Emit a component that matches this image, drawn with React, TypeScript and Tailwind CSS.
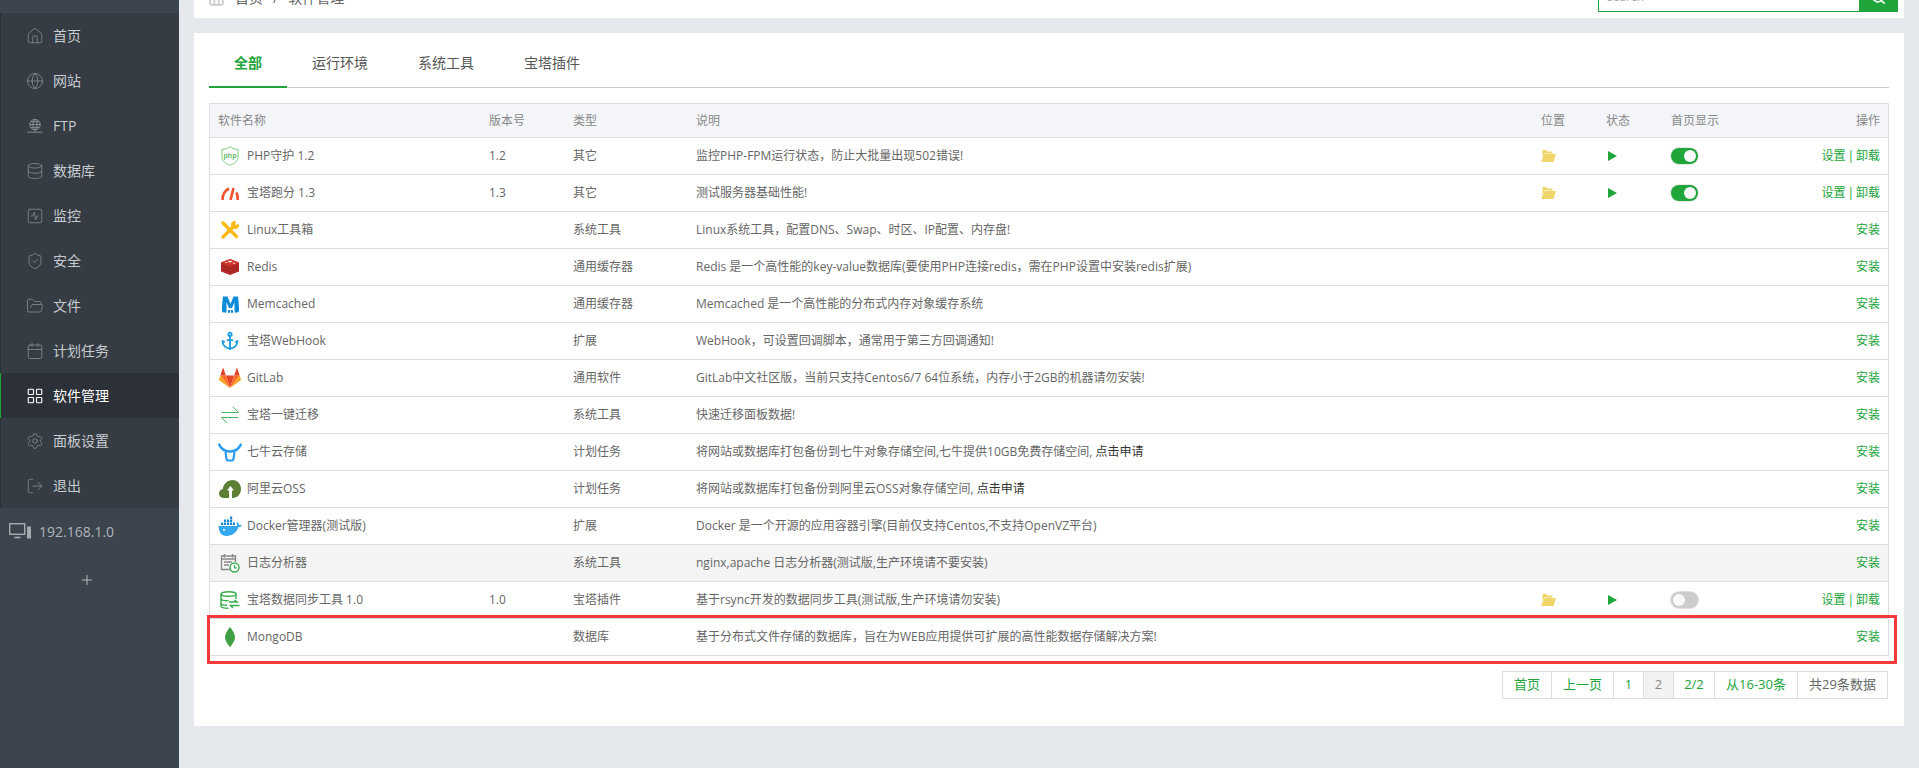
import type { ReactNode } from 'react';
import {
  Anchor,
  Calendar,
  Database,
  FolderOpen,
  Globe,
  House,
  LayoutGrid,
  LogOut,
  Plus,
  Search,
  Settings,
  ShieldCheck,
  SquareActivity,
} from 'lucide-react';

const FtpIcon = ({ className }: { className?: string }) => (
  <svg viewBox="-1.5 -1.5 19 19" fill="none" stroke="currentColor" strokeWidth="1" className={className}>
    <circle cx="8" cy="6.500" r="5.500" />
    <path d="M2.500 6.500h11M8 1c-3 3-3 8 0 11M8 1c3 3 3 8 0 11M3.500 3.500h9M3.500 9.500h9M0 14.500h16M8 12v2" />
  </svg>
);

const PhpIcon = () => (
  <svg viewBox="0 0 18 20" className="w-[18px] h-[20px]">
    <path d="M9 .8c2.500 1.700 5 2.400 8 2.600v7.400c0 4-3.400 6.800-8 8.400-4.600-1.600-8-4.400-8-8.400V3.400c3-.2 5.500-.9 8-2.600z" fill="none" stroke="#7ccd82" strokeWidth="1" />
    <text x="9" y="12" textAnchor="middle" fontSize="7" fontWeight="700" fill="#63bb6a" fontFamily="Liberation Sans, sans-serif">php</text>
  </svg>
);

const SpeedIcon = () => (
  <svg viewBox="0 0 18 14" fill="none" stroke="#f4522d" strokeWidth="2.600" className="w-[18px] h-[14px]">
    <path d="M1.500 14C1.500 8.500 4 4.500 8 2.500M9.500 14l3-12M15.500 6.500c1 2.500 1.300 5 1.300 7.500" />
  </svg>
);

const ToolIcon = () => (
  <svg viewBox="0 0 18 18" className="w-[18px] h-[18px]">
    <path d="M2 16 12.500 5.500" stroke="#fdb813" strokeWidth="3.200" strokeLinecap="round" />
    <path d="M2.500 2.500 15.500 15.500" stroke="#fdb813" strokeWidth="3.200" strokeLinecap="round" />
    <circle cx="14" cy="4" r="4" fill="#fdb813" />
    <path d="M14 4l1-4h3v3z" fill="#fff" />
    <path d="M0 1.500 1.500 0l3.500 2.500-2.500 2.500z" fill="#fdb813" />
  </svg>
);

const RedisIcon = () => (
  <svg viewBox="0 0 18 16" className="w-[18px] h-[16px]">
    <path d="M0 3.500 9 0l9 3.500v9L9 16l-9-3.500z" fill="#b52b27" />
    <path d="M9 0l9 3.500L9 7 0 3.500z" fill="#d1352f" />
    <path d="M0 6.500 9 10l9-3.500M0 9.500 9 13l9-3.500" fill="none" stroke="#8f201c" strokeWidth=".7" />
    <path d="M9 1.500l2.500 1L9 3.600l-2.500-1.100z" fill="#fff" />
    <path d="M3.500 3.500 5 3l1.500.6L5 4.200zM11.500 4.300l2-.7 1.200.6-2 .7z" fill="#f6c9c6" />
  </svg>
);

const MemcachedIcon = () => (
  <svg viewBox="0 0 17 17" className="w-[17px] h-[17px]">
    <path d="M1 .5h4.500L8.500 8l3-7.500H16c.6 4.500 1 9.500 1 14 0 1.200-.6 2-1.800 2h-2.700V6L10 12H7L4.500 6v10.500H1.800C.6 16.500 0 15.700 0 14.500 0 10 .4 5 1 .5z" fill="#0a8bd8" />
    <rect x="6" y="14" width="2" height="2.800" fill="#0a8bd8" />
    <rect x="9" y="14" width="2" height="2.800" fill="#0a8bd8" />
  </svg>
);

const GitlabIcon = () => (
  <svg viewBox="0 0 22 20" className="w-[22px] h-[20px]">
    <path d="M11 20 15.100 7.500H6.900z" fill="#e24329" />
    <path d="M11 20 6.900 7.500H1.300z" fill="#fc6d26" />
    <path d="M11 20l4.100-12.500h5.600z" fill="#fc6d26" />
    <path d="M1.300 7.500.1 11.200c-.1.500 0 1 .4 1.300L11 20z" fill="#fca326" />
    <path d="M20.700 7.500l1.200 3.700c.1.500 0 1-.4 1.300L11 20z" fill="#fca326" />
    <path d="M1.300 7.500h5.600L4.500.4c-.1-.4-.7-.4-.8 0z" fill="#e24329" />
    <path d="M20.700 7.500h-5.600L17.500.4c.1-.4.700-.4.800 0z" fill="#e24329" />
  </svg>
);

const TransferIcon = () => (
  <svg viewBox="0 0 18 18" fill="none" stroke="#46b45c" strokeWidth="1" className="w-[18px] h-[18px]">
    <path d="M.500 6.500h17L12 .8M17.500 11.500H.500L6 17.200" />
  </svg>
);

const QiniuIcon = () => (
  <svg viewBox="0 0 24 19" fill="none" stroke="#2a9bf3" className="w-[24px] h-[19px]">
    <path d="M.8.800C3 6.500 7 8.500 12 8.500s9-2 11.200-7.700" strokeWidth="2.400" />
    <path d="M7.500 9 8.500 16c.1.800.6 1.500 1.500 1.500h4c.9 0 1.400-.7 1.500-1.500l1-7" strokeWidth="2.200" />
  </svg>
);

const AliyunIcon = () => (
  <svg viewBox="0 0 22 18" className="w-[22px] h-[18px]">
    <path d="M5 18c-3 0-5-2-5-4.500C0 11 1.800 9.300 3.800 9 4.200 4 8.500 0 13.500 0 18.500 0 22 4 22 9c0 5-3.500 9-8.500 9z" fill="#5f7e35" />
    <path d="M11.500 6 8 10.500h2V18h3v-7.500h2z" fill="#fff" />
  </svg>
);

const DockerIcon = () => (
  <svg viewBox="0 0 24 20" className="w-[24px] h-[20px]">
    <path d="M.5 10h18.200c.8-1 .3-2.500-.3-3.200l.6-.8c1.200.7 1.800 1.700 2 2.800.9-.3 2-.1 2.800.4-.6 1.400-1.900 1.900-3.200 1.900C19 16 14.500 20 8.500 20 3 20 .5 15 .5 10z" fill="#33a8ef" />
    <path d="M3 6.500h2.200v2.600H3zM6 6.500h2.200v2.600H6zM9 6.500h2.200v2.600H9zM12 6.500h2.200v2.600H12zM15 6.500h2v2.600h-2zM6 3.500h2.200v2.500H6zM9 3.500h2.200v2.500H9zM12 3.500h2.200v2.500H12zM12 .5h2.200V3H12z" fill="#1f87cf" />
    <circle cx="6" cy="14" r="1" fill="#fff" />
  </svg>
);

const LogIcon = () => (
  <svg viewBox="0 0 20 20" fill="none" className="w-[20px] h-[20px]">
    <path d="M12 16.500H1.500V3h14v6" stroke="#888" strokeWidth="1.300" />
    <path d="M4.500 1v3.500M12.500 1v3.500M1.500 6h14M4 9h8M4 12h5" stroke="#888" strokeWidth="1.300" />
    <circle cx="14.500" cy="14.500" r="4.500" stroke="#3aae52" strokeWidth="1.400" fill="#fff" />
    <path d="M14.500 12v2.800h2.300" stroke="#3aae52" strokeWidth="1.200" />
  </svg>
);

const DbSyncIcon = () => (
  <svg viewBox="0 0 20 18" fill="none" stroke="#35ac4c" strokeWidth="1.400" className="w-[20px] h-[18px]">
    <ellipse cx="8.500" cy="3" rx="7.500" ry="2.300" />
    <path d="M1 3v12c0 1.300 3 2.200 7.500 2.200M16 3v5M1 7.500c0 1.300 3 2.300 7.500 2.300M1 12c0 1.300 3 2.200 6 2.200M9 11h8l-2.500-2M19.500 14.500h-9l2.500 2.500" />
  </svg>
);

const MongoIcon = () => (
  <svg viewBox="0 0 10 20" className="w-[10px] h-[20px]">
    <path d="M5 0c3 4 5 7 5 10.500C10 14 7 17 5.300 20h-.6C3 17 0 14 0 10.500 0 7 2 4 5 0z" fill="#3f9f42" />
  </svg>
);

const DeviceIcon = () => (
  <svg viewBox="0 0 23 16" fill="none" className="w-[23px] h-[16px]">
    <rect x=".7" y=".7" width="15" height="10.600" stroke="#a7abb0" strokeWidth="1.400" />
    <path d="M5.500 14.500h6" stroke="#a7abb0" strokeWidth="1.600" />
    <rect x="18" y="3.500" width="4" height="12" rx=".5" fill="#a7abb0" />
  </svg>
);

const FolderIcon = () => (
  <svg viewBox="0 0 15 12" className="w-[15px] h-[12px]">
    <path d="M1.500 0h3.500l1.500 1.500h5V3.500H3.500L1.500 9z" fill="#f0d569" />
    <path d="M3.800 4H15l-2.500 8H0z" fill="#f0d569" />
  </svg>
);

const Toggle = ({ on }: { on: boolean }) => (
  <span
    className={
      on
        ? 'flex justify-end items-center w-[27px] h-[16px] rounded-full bg-[#20a53a] pr-[2px] shadow-[0_0_0_1px_#e8e8e8]'
        : 'flex justify-start items-center w-[27px] h-[16px] rounded-full bg-[#cccccc] pl-[2px] shadow-[0_0_0_1px_#e0e0e0]'
    }
  >
    <span className="w-[12px] h-[12px] rounded-full bg-[#f8f8f8]" />
  </span>
);

interface SoftRow {
  name: string;
  icon: ReactNode;
  version?: string;
  type: string;
  desc: string;
  link?: boolean;
  installed?: boolean;
  home?: boolean;
  hover?: boolean;
}

const rows: SoftRow[] = [
  { name: 'PHP守护 1.2', icon: <PhpIcon />, version: '1.2', type: '其它', desc: '监控PHP-FPM运行状态，防止大批量出现502错误!', installed: true, home: true },
  { name: '宝塔跑分 1.3', icon: <SpeedIcon />, version: '1.3', type: '其它', desc: '测试服务器基础性能!', installed: true, home: true },
  { name: 'Linux工具箱', icon: <ToolIcon />, type: '系统工具', desc: 'Linux系统工具，配置DNS、Swap、时区、IP配置、内存盘!' },
  { name: 'Redis', icon: <RedisIcon />, type: '通用缓存器', desc: 'Redis 是一个高性能的key-value数据库(要使用PHP连接redis，需在PHP设置中安装redis扩展)' },
  { name: 'Memcached', icon: <MemcachedIcon />, type: '通用缓存器', desc: 'Memcached 是一个高性能的分布式内存对象缓存系统' },
  { name: '宝塔WebHook', icon: <Anchor className="w-[20px] h-[20px] text-[#1b9ce0]" strokeWidth={2.2} />, type: '扩展', desc: 'WebHook，可设置回调脚本，通常用于第三方回调通知!' },
  { name: 'GitLab', icon: <GitlabIcon />, type: '通用软件', desc: 'GitLab中文社区版，当前只支持Centos6/7 64位系统，内存小于2GB的机器请勿安装!' },
  { name: '宝塔一键迁移', icon: <TransferIcon />, type: '系统工具', desc: '快速迁移面板数据!' },
  { name: '七牛云存储', icon: <QiniuIcon />, type: '计划任务', desc: '将网站或数据库打包备份到七牛对象存储空间,七牛提供10GB免费存储空间, ', link: true },
  { name: '阿里云OSS', icon: <AliyunIcon />, type: '计划任务', desc: '将网站或数据库打包备份到阿里云OSS对象存储空间, ', link: true },
  { name: 'Docker管理器(测试版)', icon: <DockerIcon />, type: '扩展', desc: 'Docker 是一个开源的应用容器引擎(目前仅支持Centos,不支持OpenVZ平台)' },
  { name: '日志分析器', icon: <LogIcon />, type: '系统工具', desc: 'nginx,apache 日志分析器(测试版,生产环境请不要安装)', hover: true },
  { name: '宝塔数据同步工具 1.0', icon: <DbSyncIcon />, version: '1.0', type: '宝塔插件', desc: '基于rsync开发的数据同步工具(测试版,生产环境请勿安装)', installed: true, home: false },
  { name: 'MongoDB', icon: <MongoIcon />, type: '数据库', desc: '基于分布式文件存储的数据库，旨在为WEB应用提供可扩展的高性能数据存储解决方案!' },
];

const menu = [
  { label: '首页', icon: <House className="w-[18px] h-[18px]" strokeWidth={1} /> },
  { label: '网站', icon: <Globe className="w-[18px] h-[18px]" strokeWidth={1} /> },
  { label: 'FTP', icon: <FtpIcon className="w-[18px] h-[18px]" /> },
  { label: '数据库', icon: <Database className="w-[18px] h-[18px]" strokeWidth={1} /> },
  { label: '监控', icon: <SquareActivity className="w-[18px] h-[18px]" strokeWidth={1} /> },
  { label: '安全', icon: <ShieldCheck className="w-[18px] h-[18px]" strokeWidth={1} /> },
  { label: '文件', icon: <FolderOpen className="w-[18px] h-[18px]" strokeWidth={1} /> },
  { label: '计划任务', icon: <Calendar className="w-[18px] h-[18px]" strokeWidth={1} /> },
  { label: '软件管理', icon: <LayoutGrid className="w-[18px] h-[18px]" strokeWidth={1.5} />, active: true },
  { label: '面板设置', icon: <Settings className="w-[18px] h-[18px]" strokeWidth={1} /> },
  { label: '退出', icon: <LogOut className="w-[18px] h-[18px]" strokeWidth={1} /> },
];

const pages = [
  { label: '首页', w: 'w-[50px]', cls: 'text-[#20a53a]' },
  { label: '上一页', w: 'w-[63px]', cls: 'text-[#20a53a]' },
  { label: '1', w: 'w-[31px]', cls: 'text-[#20a53a]' },
  { label: '2', w: 'w-[31px]', cls: 'text-[#888888] bg-[#f2f2f2]' },
  { label: '2/2', w: 'w-[42px]', cls: 'text-[#20a53a]' },
  { label: '从16-30条', w: 'w-[84px]', cls: 'text-[#20a53a]' },
  { label: '共29条数据', w: 'w-[91px]', cls: 'text-[#666666]' },
];

const headCell = 'px-[8px] font-normal text-left text-[#888888] border-b border-[#dddddd]';

function Sidebar() {
  return (
    <div className="w-[179px] shrink-0 h-full flex flex-col bg-[#3c444d]">
      <div className="h-[13px]" />
      {/* Menu */}
      <div className="bg-[#363c44]">
        {menu.map((m) => (
          <div
            key={m.label}
            className={
              m.active
                ? 'h-[45px] flex items-center gap-[9px] pl-[25px] border-l border-[#20a53a] bg-[#2c3038] text-[#ffffff] text-[14px]'
                : 'h-[45px] flex items-center gap-[9px] pl-[25px] border-l border-[#2c3138] text-[#8d939a] text-[14px]'
            }
          >
            {m.icon}
            <span className={m.active ? 'text-white' : 'text-[#c6cbd0]'}>{m.label}</span>
          </div>
        ))}
      </div>
      {/* Host */}
      <div className="h-[46px] flex items-center gap-[7px] pl-[9px] text-[14px] text-[#b0b5ba]">
        <DeviceIcon />
        <span>192.168.1.0</span>
      </div>
      <div className="flex justify-center mt-[18px] pr-[5px] text-[#b5b9bd]">
        <Plus className="w-[16px] h-[16px]" strokeWidth={1.5} />
      </div>
    </div>
  );
}

export default function App() {
  return (
    <div className="flex h-[768px] overflow-hidden bg-[#e5e8ed] font-['Open_Sans','Noto_Sans_CJK_SC',sans-serif]">
      <Sidebar />
      <div className="flex-1 px-[15px] -mt-[32px]">
        {/* Breadcrumb bar, page is scrolled so only its bottom shows */}
        <div className="h-[50px] bg-white flex justify-between items-end pl-[14px] pr-[6px] pb-[6px]">
          <div className="flex items-center mb-[4px] text-[14px] leading-[20px] text-[#666666]">
            <House className="w-[17px] h-[17px] text-[#cccccc]" strokeWidth={2.5} />
            <span className="ml-[10px]">首页</span>
            <span className="mx-[10px]">/</span>
            <span>软件管理</span>
          </div>
          <div className="flex w-[300px] h-[30px] border border-[#20a53a]">
            <input placeholder="search" className="flex-1 min-w-0 px-[8px] text-[12px] placeholder:text-[#aaaaaa]" />
            <span className="w-[38px] bg-[#20a53a] flex items-center justify-center text-white">
              <Search className="w-[15px] h-[15px]" strokeWidth={2.5} />
            </span>
          </div>
        </div>

        <div className="mt-[15px] bg-white px-[15px] pt-[15px] pb-[27px]">
          {/* Tabs */}
          <div className="flex border-b border-[#cccccc] h-[40px] text-[14px] leading-[20px]">
            <div className="px-[25px] pt-[5px] h-[40px] border-b-2 border-[#20a53a] text-[#20a53a] font-semibold">全部</div>
            <div className="px-[25px] pt-[5px] text-[#555555]">运行环境</div>
            <div className="px-[25px] pt-[5px] text-[#555555]">系统工具</div>
            <div className="px-[25px] pt-[5px] text-[#555555]">宝塔插件</div>
          </div>

          {/* Software table */}
          <div className="relative mt-[15px] border border-[#dddddd]">
            <table className="w-full table-fixed border-separate border-spacing-0 text-[12px] text-[#666666]">
              <thead>
                <tr className="h-[34px] bg-[#f4f5f9]">
                  <th className={`${headCell} w-[271px]`}>软件名称</th>
                  <th className={`${headCell} w-[84px]`}>版本号</th>
                  <th className={`${headCell} w-[123px]`}>类型</th>
                  <th className={`${headCell} w-[845px]`}>说明</th>
                  <th className={`${headCell} w-[65px]`}>位置</th>
                  <th className={`${headCell} w-[65px]`}>状态</th>
                  <th className={`${headCell} w-[117px]`}>首页显示</th>
                  <th className={`${headCell} w-[108px] text-right`}>操作</th>
                </tr>
              </thead>
              <tbody>
                {rows.map((r, i) => {
                  const cell = i === rows.length - 1 ? 'h-[36px] px-[8px]' : 'h-[37px] px-[8px] border-b border-[#dddddd]';
                  return (
                    <tr key={r.name} className={r.hover ? 'bg-[#f4f4f4]' : ''}>
                      <td className={cell}>
                        <div className="flex items-center">
                          <span className="w-[24px] flex justify-center mr-[5px]">{r.icon}</span>
                          <span className="whitespace-nowrap">{r.name}</span>
                        </div>
                      </td>
                      <td className={cell}>{r.version}</td>
                      <td className={cell}>{r.type}</td>
                      <td className={cell}>
                        {r.desc}
                        {r.link && <span className="text-[#333333]">点击申请</span>}
                      </td>
                      <td className={cell}>{r.installed && <FolderIcon />}</td>
                      <td className={cell}>
                        {r.installed && <span className="block ml-[2px] w-0 h-0 border-y-[5.500px] border-y-transparent border-l-[9px] border-l-[#20a53a]" />}
                      </td>
                      <td className={cell}>{r.installed && <Toggle on={!!r.home} />}</td>
                      <td className={`${cell} text-right text-[#20a53a]`}>
                        {r.installed ? (
                          <>
                            设置<span className="mx-[2px]">|</span>卸载
                          </>
                        ) : (
                          '安装'
                        )}
                      </td>
                    </tr>
                  );
                })}
              </tbody>
            </table>
            {/* Red highlight drawn over the MongoDB row */}
            <div className="absolute -left-[3px] top-[511px] w-[1690px] h-[49px] border-[3px] border-[#f73a3a]" />
          </div>

          {/* Pagination */}
          <div className="flex justify-end mt-[15px] pr-[1px] text-[13px]">
            {pages.map((p) => (
              <span key={p.label} className={`${p.w} ${p.cls} -ml-px h-[28px] flex items-center justify-center border border-[#dddddd]`}>
                {p.label}
              </span>
            ))}
          </div>
        </div>
      </div>
    </div>
  );
}
